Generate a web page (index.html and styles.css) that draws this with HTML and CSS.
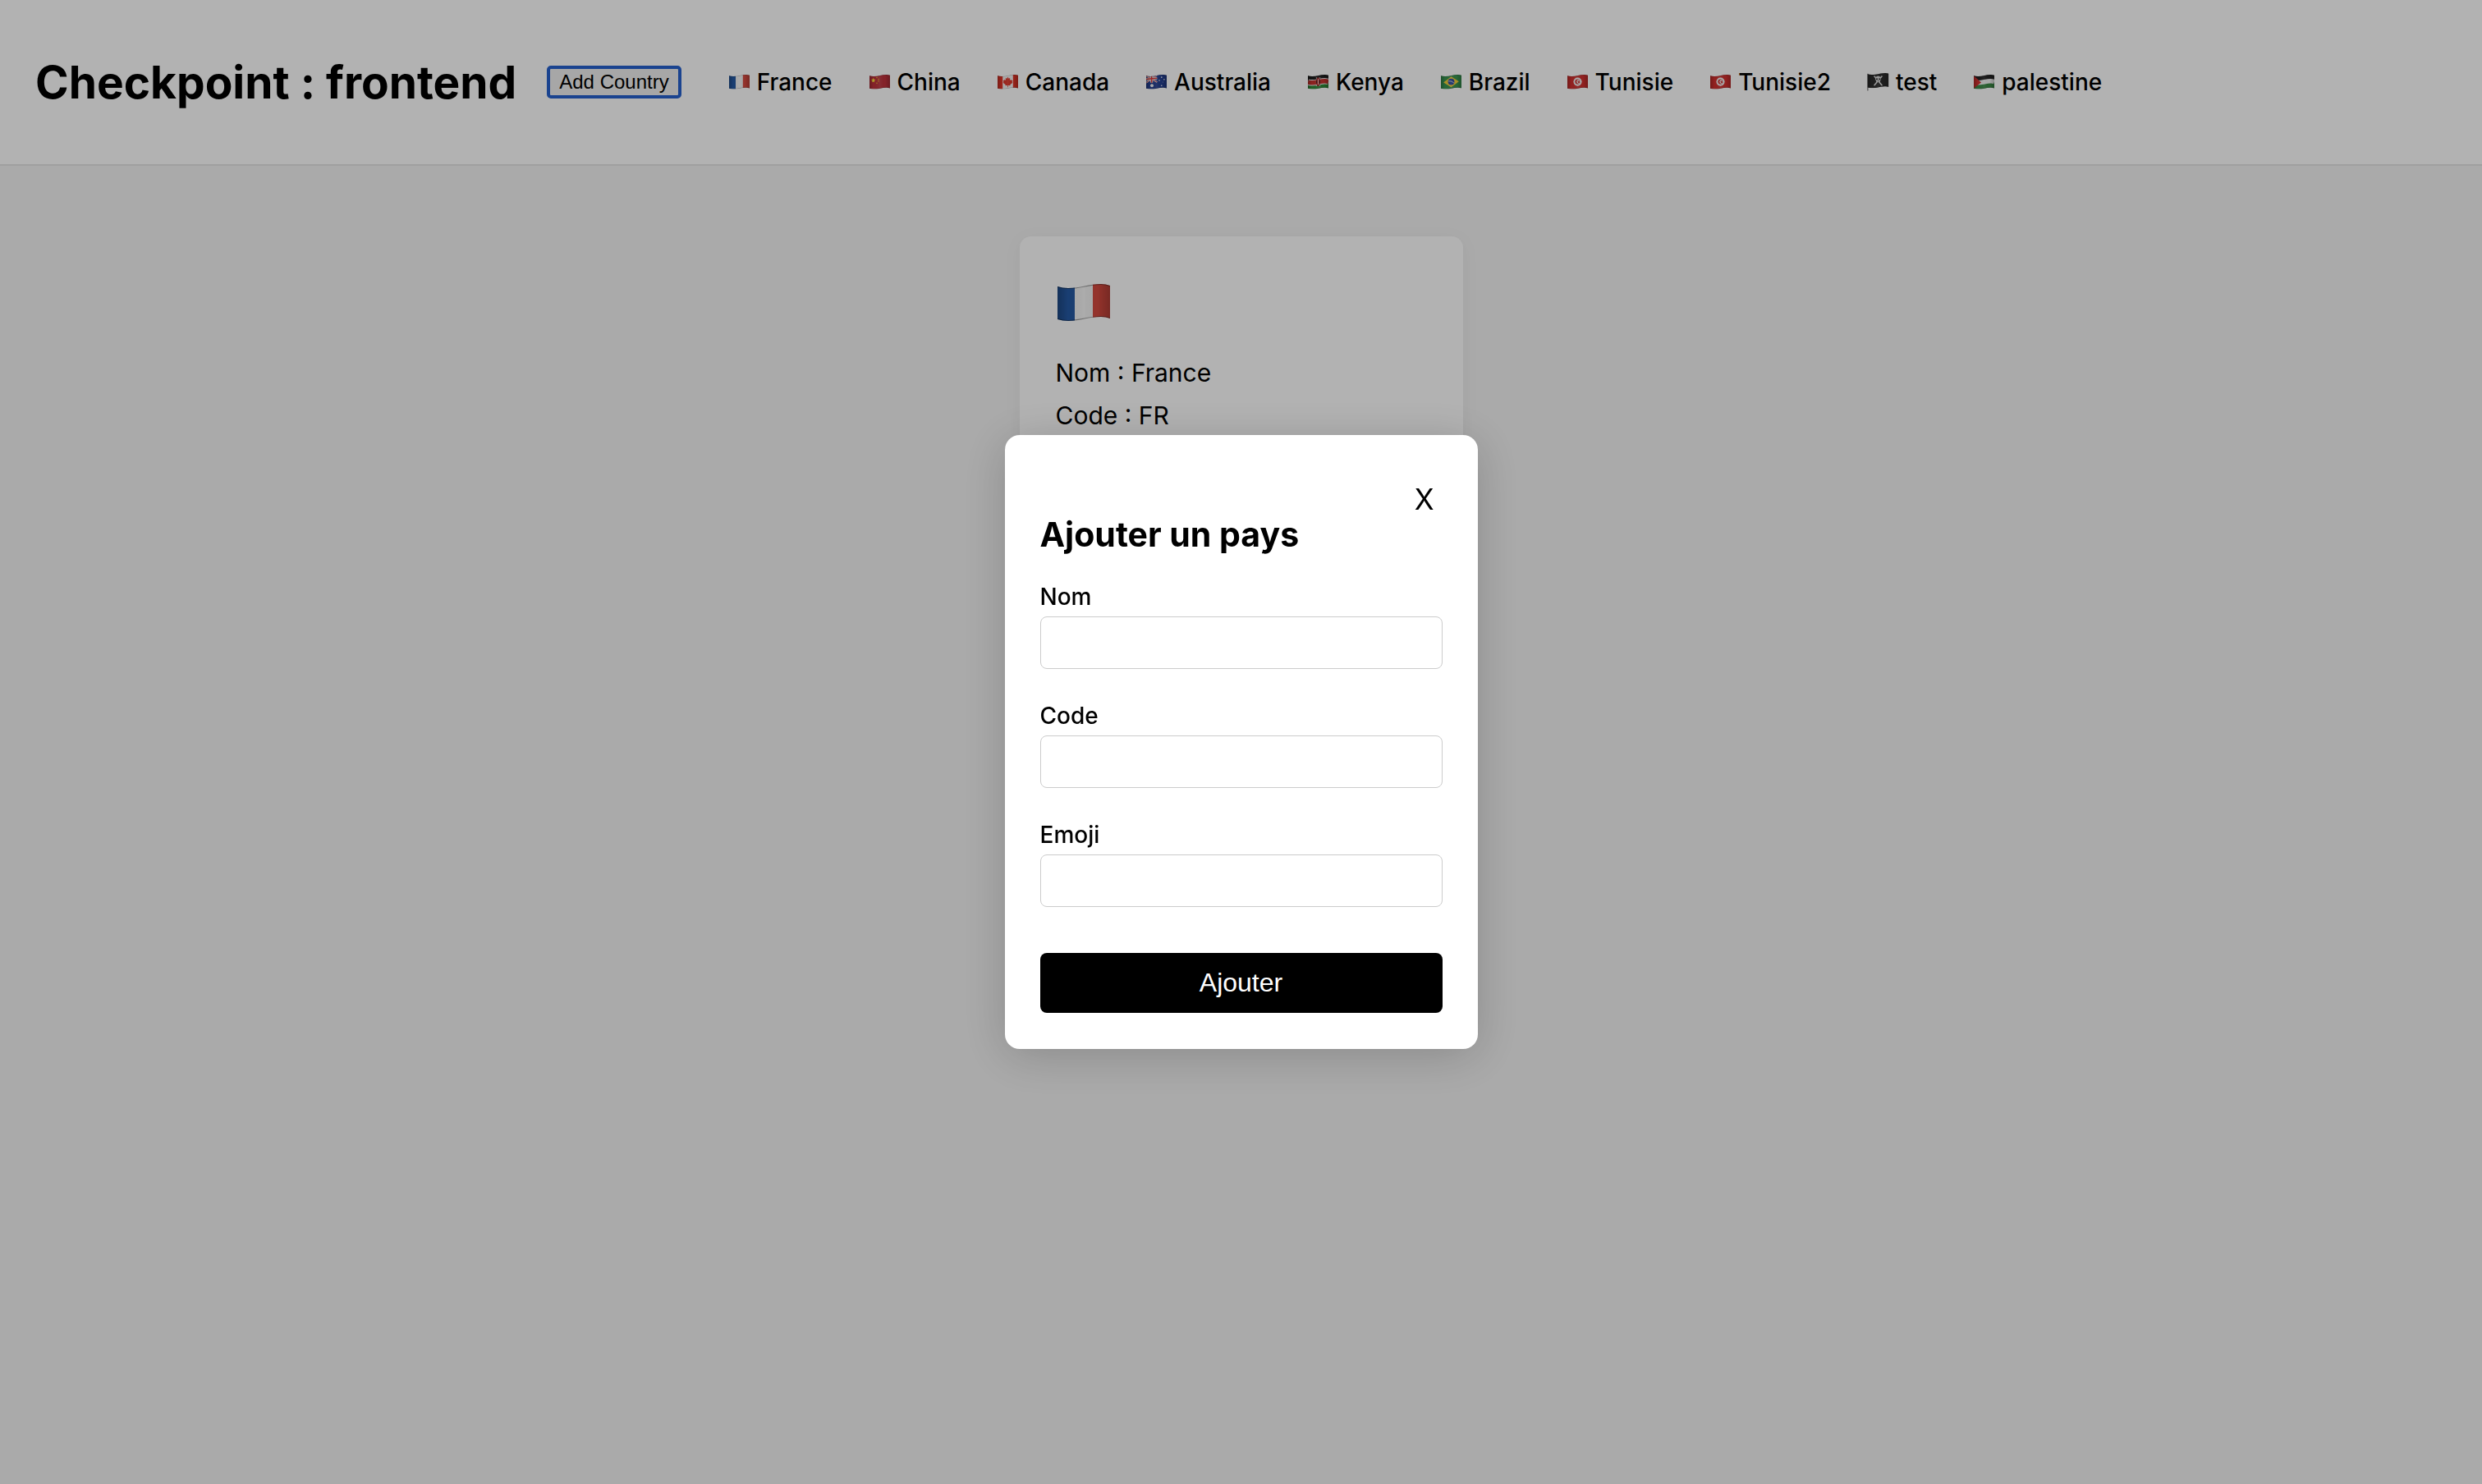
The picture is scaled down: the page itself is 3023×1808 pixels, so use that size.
FILE: index.html
```
<!DOCTYPE html>
<html lang="fr">
<head>
<meta charset="utf-8">
<meta name="viewport" content="width=device-width, initial-scale=1">
<title>Checkpoint : frontend</title>
<link rel="stylesheet" href="styles.css">
</head>
<body>
<svg class="sprite" aria-hidden="true">
  <defs>
    <linearGradient id="fold">
      <stop offset="0" stop-color="#000" stop-opacity=".22"/>
      <stop offset=".2" stop-color="#000" stop-opacity="0"/>
      <stop offset=".5" stop-color="#fff" stop-opacity=".08"/>
      <stop offset=".75" stop-color="#000" stop-opacity="0"/>
      <stop offset="1" stop-color="#000" stop-opacity=".2"/>
    </linearGradient>
    <path id="cloth" d="M0 3Q6 5 13 5C28 5 38 0 53 0Q59 0 64 2V42Q59 40 53 40C38 40 28 45 13 45Q6 45 0 43Z"/>
    <clipPath id="wave"><use href="#cloth"/></clipPath>
    <g id="shade">
      <use href="#cloth" fill="url(#fold)"/>
      <path d="M0 3Q6 5 13 5C28 5 38 0 53 0Q59 0 64 2M0 43Q6 45 13 45C28 45 38 40 53 40Q59 40 64 42" fill="none" stroke="#000" stroke-opacity=".35" stroke-width="2"/>
    </g>
    <symbol id="flag-fr" viewBox="0 0 64 46">
      <g clip-path="url(#wave)"><path fill="#255aa5" d="M0 0h21v46H0z"/><path fill="#f6f6f6" d="M21 0h22v46H21z"/><path fill="#d64a40" d="M43 0h21v46H43z"/><use href="#shade"/></g>
    </symbol>
    <symbol id="flag-cn" viewBox="0 0 64 46">
      <g clip-path="url(#wave)"><path fill="#c0323c" d="M0 0h64v46H0z"/><path fill="#ffe13c" d="M12 10l2 5 5 .5-4 3 1 5-4-2-4 2 1-5-4-3 5-.5z"/><g fill="#f0b52e"><circle cx="23" cy="9" r="2"/><circle cx="28" cy="14" r="2"/><circle cx="28" cy="20" r="2"/><circle cx="23" cy="26" r="2"/></g><use href="#shade"/></g>
    </symbol>
    <symbol id="flag-ca" viewBox="0 0 64 46">
      <g clip-path="url(#wave)"><path fill="#f6f6f6" d="M0 0h64v46H0z"/><path fill="#e03428" d="M0 0h16v46H0zM48 0h16v46H48zM32 7l3 5 4-2-1 8 4-3 1 3 4 0-2 5 2 2-8 6 1 3-7-1v6h-2v-6l-7 1 1-3-8-6 2-2-2-5 4 0 1-3 4 3-1-8 4 2z"/><use href="#shade"/></g>
    </symbol>
    <symbol id="flag-au" viewBox="0 0 64 46">
      <g clip-path="url(#wave)"><path fill="#243f91" d="M0 0h64v46H0z"/><path stroke="#eee" stroke-width="5" d="M0 3l34 20M34 0L0 25"/><path stroke="#d33" stroke-width="2" d="M0 3l34 20M34 0L0 25"/><path stroke="#eee" stroke-width="8" d="M17 0v25M0 14l34-3"/><path stroke="#d33" stroke-width="4" d="M17 0v25M0 14l34-3"/><g fill="#f5f5f5"><circle cx="18" cy="34" r="5"/><circle cx="48" cy="8" r="2"/><circle cx="41" cy="18" r="2"/><circle cx="56" cy="15" r="2"/><circle cx="48" cy="34" r="2"/><circle cx="52" cy="23" r="1"/></g><use href="#shade"/></g>
    </symbol>
    <symbol id="flag-ke" viewBox="0 0 64 46">
      <g clip-path="url(#wave)"><path fill="#1d1d1d" d="M0 0h64v20H0z"/><path fill="#2f8a37" d="M0 20h64v26H0z"/><path fill="none" stroke="#eee" stroke-width="19" d="M0 23Q6 25 13 25C28 25 38 20 53 20Q59 20 64 22"/><path fill="none" stroke="#c8322e" stroke-width="14" d="M0 23Q6 25 13 25C28 25 38 20 53 20Q59 20 64 22"/><path stroke="#eee" stroke-width="2" d="M26 8l12 28M38 8L26 36"/><ellipse cx="32" cy="22" rx="6" ry="14" fill="#a51f1f"/><path fill="#1d1d1d" d="M26 14q4 8 0 16zM38 14q-4 8 0 16z"/><path stroke="#eee" stroke-width="2" d="M32 13v18"/><use href="#shade"/></g>
    </symbol>
    <symbol id="flag-br" viewBox="0 0 64 46">
      <g clip-path="url(#wave)"><path fill="#389551" d="M0 0h64v46H0z"/><path fill="#f2cf3a" d="M8 24L32 6l24 15-24 18z"/><circle cx="32" cy="22" r="10" fill="#2b49a0"/><path d="M23 20q10-2 18 6" fill="none" stroke="#eee" stroke-width="2"/><use href="#shade"/></g>
    </symbol>
    <symbol id="flag-tn" viewBox="0 0 64 46">
      <g clip-path="url(#wave)"><path fill="#d2302f" d="M0 0h64v46H0z"/><circle cx="32" cy="22" r="13" fill="#f5f5f5"/><circle cx="32" cy="22" r="8" fill="#d2302f"/><circle cx="35" cy="22" r="6" fill="#f5f5f5"/><path fill="#d2302f" d="M36 17l1 3 3 0-2 2 2 4-4-1-2 2-1-4-3-1 4-1z"/><use href="#shade"/></g>
    </symbol>
    <symbol id="flag-pirate" viewBox="0 0 64 54">
      <path d="M1 2v51" stroke="#777" stroke-width="3"/><g clip-path="url(#wave)"><path fill="#2c2c2c" d="M0 0h64v46H0z"/><path d="M21 10l22 26M43 10L21 36" stroke="#ddd" stroke-width="4" stroke-linecap="round"/><path fill="#ddd" d="M32 9c-7 0-9 5-8 10 0 3 3 4 3 8h10c0-4 3-5 3-8 1-5-1-10-8-10z"/><path fill="#222" d="M26 16h5v4h-5zM34 16h5v4h-5zM31 22h2v3h-2z"/><use href="#shade"/></g>
    </symbol>
    <symbol id="flag-ps" viewBox="0 0 64 46">
      <g clip-path="url(#wave)"><path fill="#222" d="M0 0h64v20H0z"/><path fill="#3b8a45" d="M0 20h64v26H0z"/><path fill="none" stroke="#f3f3f3" stroke-width="14" d="M0 23Q6 25 13 25C28 25 38 20 53 20Q59 20 64 22"/><path fill="#d2302f" d="M0 3l23 21L0 43z"/><use href="#shade"/></g>
    </symbol>
  </defs>
</svg>

<header class="header">
  <h1 class="header-title">Checkpoint : frontend</h1>
  <button class="add-button" type="button">Add Country</button>
  <nav class="nav">
    <a class="nav-link" href="#fr"><svg class="flag"><use href="#flag-fr"/></svg>France</a>
    <a class="nav-link" href="#cn"><svg class="flag"><use href="#flag-cn"/></svg>China</a>
    <a class="nav-link" href="#ca"><svg class="flag"><use href="#flag-ca"/></svg>Canada</a>
    <a class="nav-link" href="#au"><svg class="flag"><use href="#flag-au"/></svg>Australia</a>
    <a class="nav-link" href="#ke"><svg class="flag"><use href="#flag-ke"/></svg>Kenya</a>
    <a class="nav-link" href="#br"><svg class="flag"><use href="#flag-br"/></svg>Brazil</a>
    <a class="nav-link" href="#tn"><svg class="flag"><use href="#flag-tn"/></svg>Tunisie</a>
    <a class="nav-link" href="#tn2"><svg class="flag"><use href="#flag-tn"/></svg>Tunisie2</a>
    <a class="nav-link" href="#test"><svg class="flag flag-pole"><use href="#flag-pirate"/></svg>test</a>
    <a class="nav-link" href="#ps"><svg class="flag"><use href="#flag-ps"/></svg>palestine</a>
  </nav>
</header>

<main class="main">
  <article class="card">
    <svg class="card-flag" role="img" aria-label="France"><use href="#flag-fr"/></svg>
    <p class="card-line">Nom : France</p>
    <p class="card-line">Code : FR</p>
  </article>
</main>

<div class="overlay">
  <section class="modal" role="dialog" aria-modal="true" aria-labelledby="modal-title">
    <button class="close-button" type="button">X</button>
    <h2 class="modal-title" id="modal-title">Ajouter un pays</h2>
    <form class="form">
      <div class="field">
        <label class="label" for="name">Nom</label>
        <input class="input" id="name" type="text">
      </div>
      <div class="field">
        <label class="label" for="code">Code</label>
        <input class="input" id="code" type="text">
      </div>
      <div class="field">
        <label class="label" for="emoji">Emoji</label>
        <input class="input" id="emoji" type="text">
      </div>
      <button class="submit-button" type="submit">Ajouter</button>
    </form>
  </section>
</div>
</body>
</html>
```
FILE: styles.css
```
* {
  box-sizing: border-box;
}

body {
  margin: 0;
  min-height: 100vh;
  background: #f4f4f4;
  color: #000;
  font-family: Inter, "Liberation Sans", sans-serif;
}

.sprite {
  position: absolute;
  width: 0;
  height: 0;
}

.header {
  display: flex;
  align-items: center;
  gap: 38px;
  padding: 64px 43px;
  background: #fff;
  border-bottom: 2px solid #e4e4e4;
}

.header-title {
  margin: 0;
  font-size: 55px;
  line-height: 72px;
  font-weight: 700;
  white-space: nowrap;
}

.add-button {
  padding: 4px 12px;
  border: 2px solid #767676;
  border-radius: 4px;
  outline: 4px solid #2661cd;
  outline-offset: -3px;
  background: #efefef;
  color: #000;
  font-family: "Liberation Sans", sans-serif;
  font-size: 24px;
  line-height: 26px;
  white-space: nowrap;
}

.nav {
  display: flex;
  gap: 44px;
  margin-left: 20px;
}

.nav-link {
  display: flex;
  align-items: center;
  gap: 8px;
  color: #000;
  font-size: 28px;
  line-height: 36px;
  font-weight: 500;
  text-decoration: none;
  white-space: nowrap;
}

.flag {
  width: 27px;
  height: 18px;
}

.flag-pole {
  height: 22px;
}

.main {
  display: flex;
  justify-content: center;
  padding: 86px 44px;
}

.card {
  width: 540px;
  padding: 44px;
  border-radius: 14px;
  background: #fff;
  box-shadow: 0 4px 22px rgba(0, 0, 0, 0.05);
}

.card-flag {
  display: block;
  width: 68px;
  height: 46px;
  margin: 14px 0 36px;
}

.card-line {
  margin: 0;
  font-size: 30px;
  line-height: 52px;
}

.overlay {
  position: fixed;
  inset: 0;
  display: flex;
  align-items: center;
  justify-content: center;
  background: rgba(0, 0, 0, 0.3);
}

.modal {
  display: flex;
  flex-direction: column;
  width: 576px;
  padding: 44px 43px;
  border-radius: 18px;
  background: #fff;
  box-shadow: 0 8px 56px rgba(0, 0, 0, 0.2);
}

.close-button {
  align-self: flex-end;
  padding: 16px 10px 0;
  border: 0;
  background: none;
  color: #000;
  font-family: inherit;
  font-size: 35px;
  line-height: 36px;
}

.modal-title {
  margin: 0 0 34px;
  font-size: 41px;
  line-height: 50px;
  font-weight: 700;
}

.form {
  display: flex;
  flex-direction: column;
  gap: 40px;
}

.field {
  display: flex;
  flex-direction: column;
  gap: 7px;
}

.label {
  font-size: 28px;
  line-height: 34px;
  font-weight: 500;
}

.input {
  width: 100%;
  height: 64px;
  padding: 0 14px;
  border: 1px solid #ccc;
  border-radius: 8px;
  background: #fff;
  font: inherit;
  font-size: 28px;
}

.submit-button {
  margin-top: 16px;
  padding: 18px;
  border: 0;
  border-radius: 8px;
  background: #000;
  color: #fff;
  font-family: "Liberation Sans", sans-serif;
  font-size: 32px;
  line-height: 37px;
}
```
